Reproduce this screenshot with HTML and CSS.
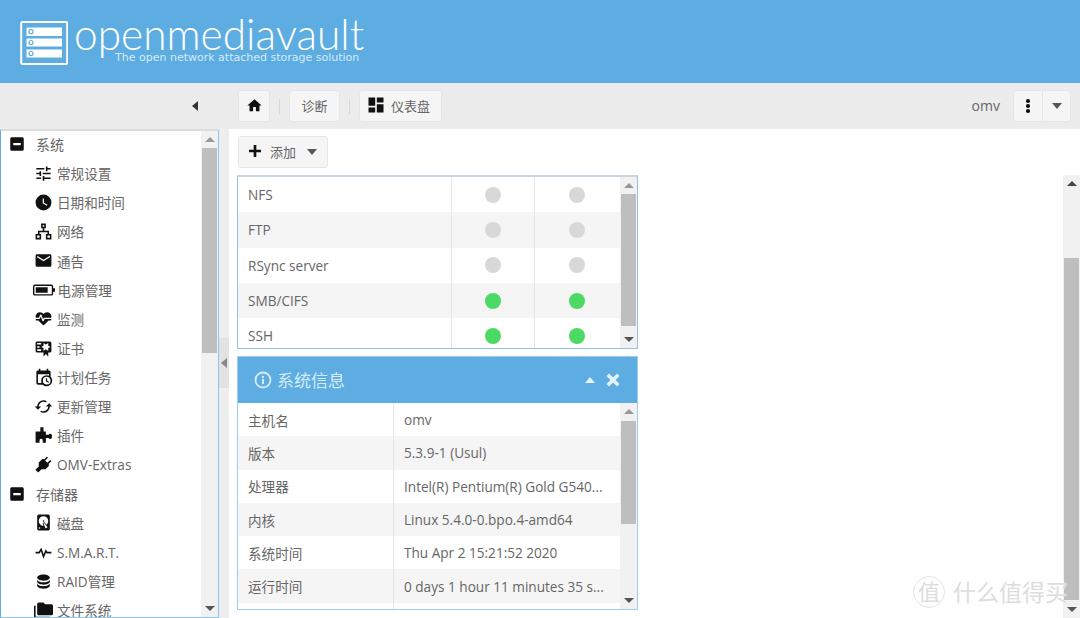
FILE: index.html
```html
<!DOCTYPE html>
<html lang="zh-CN">
<head>
  <meta charset="UTF-8" />
  <title>openmediavault</title>
  <link rel="stylesheet" href="styles.css">
</head>
<body>
  <svg class="defs" width="0" height="0">
    <symbol id="i-home" viewBox="0 0 24 24"><path d="M10,20V14H14V20H19V12H22L12,3L2,12H5V20H10Z"/></symbol>
    <symbol id="i-dash" viewBox="0 0 24 24"><path d="M13,3V9H21V3M13,21H21V11H13M3,21H11V15H3M3,13H11V3H3V13Z"/></symbol>
    <symbol id="i-plus" viewBox="0 0 24 24"><path d="M3,10H10V3H14V10H21V14H14V21H10V14H3Z"/></symbol>
    <symbol id="i-minus" viewBox="0 0 24 24"><path d="M17,13.5H7V10.5H17M19,3H5C3.89,3 3,3.89 3,5V19A2,2 0 0,0 5,21H19A2,2 0 0,0 21,19V5C21,3.89 20.1,3 19,3Z"/></symbol>
    <symbol id="i-tune" viewBox="0 0 24 24"><path d="M3,17V19H9V17H3M3,5V7H13V5H3M13,21V19H21V17H13V15H11V21H13M7,9V11H3V13H7V15H9V9H7M21,13V11H11V13H21M15,9H17V7H21V5H17V3H15V9Z"/></symbol>
    <symbol id="i-clock" viewBox="0 0 24 24"><path d="M12,2A10,10 0 0,0 2,12A10,10 0 0,0 12,22A10,10 0 0,0 22,12A10,10 0 0,0 12,2M16.2,16.2L11,13V7H12.5V12.2L17,14.9L16.2,16.2Z"/></symbol>
    <symbol id="i-net" viewBox="0 0 24 24"><path fill-rule="evenodd" d="M9,2H15V8H13V11H19V15H22V22H15V15H17V13H7V15H9V22H2V15H5V11H11V8H9V2M11,4V6H13V4H11M4,17V20H7V17H4M17,17V20H20V17H17Z"/></symbol>
    <symbol id="i-mail" viewBox="0 0 24 24"><path d="M20,8L12,13L4,8V6L12,11L20,6M20,4H4C2.89,4 2,4.89 2,6V18A2,2 0 0,0 4,20H20A2,2 0 0,0 22,18V6C22,4.89 21.1,4 20,4Z"/></symbol>
    <symbol id="i-batt" viewBox="0 0 24 24"><path fill-rule="evenodd" d="M2,6H20A2,2 0 0,1 22,8V10H24V14H22V16A2,2 0 0,1 20,18H2A2,2 0 0,1 0,16V8A2,2 0 0,1 2,6M2,7.5A.5,.5 0 0,0 1.5,8V16A.5,.5 0 0,0 2,16.5H20A.5,.5 0 0,0 20.5,16V8A.5,.5 0 0,0 20,7.5H2M3,9H16V15H3Z"/></symbol>
    <symbol id="i-heart" viewBox="0 0 24 24"><path d="M7.5,4A5.5,5.5 0 0,0 2,9.5C2,10 2.09,10.5 2.22,11H6.3L7.57,7.63C7.87,6.83 9.05,6.75 9.43,7.63L11.5,13L12.09,11.58C12.22,11.25 12.57,11 13,11H21.78C21.91,10.5 22,10 22,9.5A5.5,5.5 0 0,0 16.5,4C14.64,4 13,4.93 12,6.34C11,4.93 9.36,4 7.5,4M3,12.5A1,1 0 0,0 2,13.5A1,1 0 0,0 3,14.5H5.44L11,20C12,20.9 12,20.9 13,20L18.56,14.5H21A1,1 0 0,0 22,13.5A1,1 0 0,0 21,12.5H13.4L12.47,14.8C12.07,15.81 10.92,15.67 10.55,14.83L8.5,9.5L7.54,11.83C7.39,12.21 7.05,12.5 6.6,12.5H3Z"/></symbol>
    <symbol id="i-cert" viewBox="0 0 24 24"><path d="M4,3C2.89,3 2,3.89 2,5V15A2,2 0 0,0 4,17H12V22L15,19L18,22V17H20A2,2 0 0,0 22,15V8L22,6V5A2,2 0 0,0 20,3H16V3H4M12,5L15,7L18,5V8.5L21,10L18,11.5V15L15,13L12,15V11.5L9,10L12,8.5V5M4,5H9V7H4V5M4,9H7V11H4V9M4,13H9V15H4V13Z"/></symbol>
    <symbol id="i-cal" viewBox="0 0 24 24"><path d="M15,13H16.5V15.82L18.94,17.23L18.19,18.53L15,16.69V13M19,8H5V19H9.67C9.24,18.09 9,17.07 9,16A7,7 0 0,1 16,9C17.07,9 18.09,9.24 19,9.67V8M5,21C3.89,21 3,20.1 3,19V5C3,3.89 3.89,3 5,3H6V1H8V3H16V1H18V3H19A2,2 0 0,1 21,5V11.1C22.24,12.36 23,14.09 23,16A7,7 0 0,1 16,23C14.09,23 12.36,22.24 11.1,21H5M16,11.15A4.85,4.85 0 0,0 11.15,16C11.15,18.68 13.32,20.85 16,20.85A4.85,4.85 0 0,0 20.85,16C20.85,13.32 18.68,11.15 16,11.15Z"/></symbol>
    <symbol id="i-sync" viewBox="0 0 24 24"><path d="M12,18A6,6 0 0,1 6,12C6,11 6.25,10.03 6.7,9.2L5.24,7.74C4.46,8.97 4,10.43 4,12A8,8 0 0,0 12,20V23L16,19L12,15M12,4V1L8,5L12,9V6A6,6 0 0,1 18,12C18,13 17.75,13.97 17.3,14.8L18.76,16.26C19.54,15.03 20,13.57 20,12A8,8 0 0,0 12,4Z" transform="rotate(90 12 12)"/></symbol>
    <symbol id="i-puzzle" viewBox="0 0 24 24"><path d="M8,1.5H12V7H15V11H18.5A2,2 0 0,1 22.5,13A2,2 0 0,1 18.5,15H15V21H11V18A2,2 0 0,0 7,18V21H2V7H8Z"/></symbol>
    <symbol id="i-plug" viewBox="0 0 24 24"><path transform="rotate(45 12 12)" d="M16,7V2H14V7H10V2H8V7C7,7 6,8 6,9V14.5L9.5,18V24H14.5V18L18,14.5V9C18,8 17,7 16,7Z"/></symbol>
    <symbol id="i-disk" viewBox="0 0 24 24"><path d="M6,2H18A2,2 0 0,1 20,4V20A2,2 0 0,1 18,22H6A2,2 0 0,1 4,20V4A2,2 0 0,1 6,2M12,4A6,6 0 0,0 6,10C6,13.31 8.69,16 12.1,16L11.22,13.77C10.95,13.29 11.11,12.68 11.59,12.4L12.45,11.9C12.93,11.63 13.54,11.79 13.82,12.27L15.74,14.69C17.12,13.59 18,11.9 18,10A6,6 0 0,0 12,4M12,9A1,1 0 0,1 13,10A1,1 0 0,1 12,11A1,1 0 0,1 11,10A1,1 0 0,1 12,9M7,18A1,1 0 0,0 6,19A1,1 0 0,0 7,20A1,1 0 0,0 8,19A1,1 0 0,0 7,18M12.09,13.27L14.58,19.58L17.17,18.08L12.95,12.77L12.09,13.27Z"/></symbol>
    <symbol id="i-pulse" viewBox="0 0 24 24"><path d="M2,12.2H6.5L9,8L12,17L15,10L16.5,12.2H22" fill="none" stroke="#111" stroke-width="2"/></symbol>
    <symbol id="i-db" viewBox="0 0 24 24"><path d="M12,3C7.58,3 4,4.79 4,7C4,9.21 7.58,11 12,11C16.42,11 20,9.21 20,7C20,4.79 16.42,3 12,3M4,9V12C4,14.21 7.58,16 12,16C16.42,16 20,14.21 20,12V9C20,11.21 16.42,13 12,13C7.58,13 4,11.21 4,9M4,14V17C4,19.21 7.58,21 12,21C16.42,21 20,19.21 20,17V14C20,16.21 16.42,18 12,18C7.58,18 4,16.21 4,14Z"/></symbol>
    <symbol id="i-folder" viewBox="0 0 24 24"><path d="M22,4H14L12,2H6A2,2 0 0,0 4,4V16A2,2 0 0,0 6,18H22A2,2 0 0,0 24,16V6A2,2 0 0,0 22,4M2,6H0V20A2,2 0 0,0 2,22H20V20H2V6Z"/></symbol>
  </svg>

  <header class="topbar">
    <svg class="logo" viewBox="0 0 48 44" width="48" height="44">
      <rect x="1.2" y="1" width="46" height="42" rx="1.5" fill="none" stroke="#fff" stroke-width="2"/>
      <g fill="#fff">
        <rect x="6.5" y="6.5" width="35.5" height="8.5"/>
        <rect x="6.5" y="17.5" width="35.5" height="8"/>
        <rect x="6.5" y="28.5" width="35.5" height="8"/>
      </g>
      <g fill="none" stroke="#5dade2" stroke-width="1.2">
        <circle cx="11" cy="10.7" r="2"/>
        <circle cx="11" cy="21.5" r="2"/>
        <circle cx="11" cy="32.5" r="2"/>
      </g>
    </svg>
    <div class="brand">
      <div class="brand-name">openmediavault</div>
      <div class="brand-tag">The open network attached storage solution</div>
    </div>
  </header>

  <nav class="toolbar">
    <div class="toolbar-side"><i class="tri tri-left"></i></div>
    <div class="crumbs">
      <button class="btn btn-home"><svg class="ico ico-home"><use href="#i-home"/></svg></button>
      <span class="crumb-sep"></span>
      <button class="btn btn-diag">诊断</button>
      <span class="crumb-sep"></span>
      <button class="btn btn-dash"><svg class="ico"><use href="#i-dash"/></svg>仪表盘</button>
    </div>
    <div class="user">
      <span class="user-name">omv</span>
      <div class="btn-group">
        <button class="btn-part btn-dots"><i></i><i></i><i></i></button>
        <button class="btn-part"><i class="tri tri-down"></i></button>
      </div>
    </div>
  </nav>

  <div class="workspace">
    <aside class="sidebar">
      <ul class="menu">
        <li class="menu-group"><svg class="ico"><use href="#i-minus"/></svg>系统</li>
        <li class="menu-item"><svg class="ico"><use href="#i-tune"/></svg>常规设置</li>
        <li class="menu-item"><svg class="ico"><use href="#i-clock"/></svg>日期和时间</li>
        <li class="menu-item"><svg class="ico"><use href="#i-net"/></svg>网络</li>
        <li class="menu-item"><svg class="ico"><use href="#i-mail"/></svg>通告</li>
        <li class="menu-item"><svg class="ico ico-wide"><use href="#i-batt"/></svg>电源管理</li>
        <li class="menu-item"><svg class="ico"><use href="#i-heart"/></svg>监测</li>
        <li class="menu-item"><svg class="ico"><use href="#i-cert"/></svg>证书</li>
        <li class="menu-item"><svg class="ico"><use href="#i-cal"/></svg>计划任务</li>
        <li class="menu-item"><svg class="ico"><use href="#i-sync"/></svg>更新管理</li>
        <li class="menu-item"><svg class="ico"><use href="#i-puzzle"/></svg>插件</li>
        <li class="menu-item"><svg class="ico"><use href="#i-plug"/></svg>OMV-Extras</li>
        <li class="menu-group"><svg class="ico"><use href="#i-minus"/></svg>存储器</li>
        <li class="menu-item"><svg class="ico"><use href="#i-disk"/></svg>磁盘</li>
        <li class="menu-item"><svg class="ico"><use href="#i-pulse"/></svg>S.M.A.R.T.</li>
        <li class="menu-item"><svg class="ico"><use href="#i-db"/></svg>RAID管理</li>
        <li class="menu-item"><svg class="ico"><use href="#i-folder"/></svg>文件系统</li>
      </ul>
      <div class="scrollbar sb-side">
        <i class="tri tri-up"></i>
        <div class="thumb"></div>
        <i class="tri tri-down"></i>
      </div>
    </aside>

    <div class="splitter"><div class="splitter-handle"><i class="tri tri-left"></i></div></div>

    <main class="main">
      <div class="main-tools">
        <button class="btn btn-add"><svg class="ico ico-16"><use href="#i-plus"/></svg>添加<i class="tri tri-down"></i></button>
      </div>
      <div class="main-body">
        <div class="widgets">
          <section class="panel panel-services">
            <div class="panel-rows">
              <div class="svc-row"><span>NFS</span><span><i class="dot"></i></span><span><i class="dot"></i></span></div>
              <div class="svc-row"><span>FTP</span><span><i class="dot"></i></span><span><i class="dot"></i></span></div>
              <div class="svc-row"><span>RSync server</span><span><i class="dot"></i></span><span><i class="dot"></i></span></div>
              <div class="svc-row"><span>SMB/CIFS</span><span><i class="dot on"></i></span><span><i class="dot on"></i></span></div>
              <div class="svc-row"><span>SSH</span><span><i class="dot on"></i></span><span><i class="dot on"></i></span></div>
            </div>
            <div class="scrollbar sb-services">
              <i class="tri tri-up"></i>
              <div class="thumb"></div>
              <i class="tri tri-down"></i>
            </div>
          </section>

          <section class="panel panel-info">
            <div class="panel-head">
              <svg class="info-ico" viewBox="0 0 24 24" width="18" height="18">
                <circle cx="12" cy="12" r="10" fill="none" stroke="#d6ebf8" stroke-width="2.4"/>
                <rect x="10.6" y="10.5" width="2.8" height="7" fill="#d6ebf8"/>
                <rect x="10.6" y="6.5" width="2.8" height="2.6" fill="#d6ebf8"/>
              </svg>
              <h2>系统信息</h2>
              <i class="tri tri-up tri-head"></i>
              <svg class="close-ico" viewBox="0 0 14 14" width="14" height="14"><path d="M3,0.5L7,4.5L11,0.5L13.5,3L9.5,7L13.5,11L11,13.5L7,9.5L3,13.5L0.5,11L4.5,7L0.5,3Z" fill="#e6f2fb"/></svg>
            </div>
            <div class="panel-content">
              <div class="panel-rows">
                <div class="info-row"><span>主机名</span><span>omv</span></div>
                <div class="info-row"><span>版本</span><span>5.3.9-1 (Usul)</span></div>
                <div class="info-row"><span>处理器</span><span>Intel(R) Pentium(R) Gold G540...</span></div>
                <div class="info-row"><span>内核</span><span>Linux 5.4.0-0.bpo.4-amd64</span></div>
                <div class="info-row"><span>系统时间</span><span>Thu Apr 2 15:21:52 2020</span></div>
                <div class="info-row"><span>运行时间</span><span>0 days 1 hour 11 minutes 35 s...</span></div>
                <div class="info-row"><span></span><span></span></div>
              </div>
              <div class="scrollbar sb-info">
                <i class="tri tri-up"></i>
                <div class="thumb"></div>
                <i class="tri tri-down"></i>
              </div>
            </div>
          </section>
        </div>
        <div class="scrollbar sb-main">
          <i class="tri tri-up"></i>
          <div class="thumb"></div>
          <i class="tri tri-down"></i>
        </div>
      </div>
    </main>
  </div>

  <div class="watermark"><span class="wm-seal">值</span><span>什么值得买</span></div>
</body>
</html>
```
FILE: styles.css
```css
* {
  box-sizing: border-box;
}
html, body {
  height: 100%;
}
body {
  margin: 0;
  overflow: hidden;
  display: flex;
  flex-direction: column;
  position: relative;
  background: #fff;
  color: #666;
  font-family: "Open Sans", "Noto Sans CJK SC", sans-serif;
  font-size: 13.6px;
}
.defs {
  position: absolute;
}
.ico {
  width: 20px;
  height: 20px;
  fill: #111;
  flex: none;
}
.ico-16 {
  width: 16px;
  height: 16px;
}
.ico-home {
  width: 17px;
  height: 17px;
}

/* css triangles */
.tri {
  display: block;
  width: 0;
  height: 0;
  border-style: solid;
  border-color: transparent;
}
.tri-up {
  border-width: 0 5px 5px;
  border-bottom-color: #555;
}
.tri-down {
  border-width: 6px 5.5px 0;
  border-top-color: #555;
}
.tri-left {
  border-width: 5px 6px 5px 0;
  border-right-color: #333;
}

/* header */
.topbar {
  height: 83px;
  flex: none;
  background: #5dade2;
  display: flex;
  align-items: flex-start;
  padding: 21px 0 0 20px;
  color: #fff;
}
.logo {
  flex: none;
}
.brand {
  margin-left: 6px;
  position: relative;
}
.brand-name {
  font-family: Lato, sans-serif;
  font-weight: 300;
  font-size: 42.4px;
  line-height: 30px;
  margin-top: -2px;
  white-space: nowrap;
}
.brand-tag {
  font-family: "DejaVu Sans", sans-serif;
  font-size: 11px;
  line-height: 13px;
  margin: 2px 0 0 41px;
  color: #d6ebf8;
  white-space: nowrap;
}

/* toolbar */
.toolbar {
  height: 46px;
  flex: none;
  background: #ececec;
  display: flex;
  align-items: center;
}
.toolbar-side {
  width: 238px;
  display: flex;
  justify-content: flex-end;
  padding-right: 40px;
}
.crumbs {
  display: flex;
  align-items: center;
}
.btn {
  height: 32px;
  display: flex;
  align-items: center;
  justify-content: center;
  border: 1px solid #e6e6e6;
  border-radius: 3px;
  background: #f5f5f5;
  color: #666;
  font: inherit;
  font-size: 13px;
  padding: 0 0 2px;
}
.btn-home {
  width: 32px;
}
.btn-diag {
  width: 51px;
}
.btn-dash {
  width: 83px;
  gap: 5.5px;
  justify-content: flex-start;
  padding-left: 5.5px;
}
.crumb-sep {
  width: 1px;
  height: 15px;
  margin: 0 9px;
  background: #d8d8d8;
}
.user {
  margin-left: auto;
  display: flex;
  align-items: center;
  padding-right: 9px;
}
.user-name {
  margin-right: 13px;
  font-size: 14px;
  padding-bottom: 1px;
}
.btn-group {
  display: flex;
  height: 32px;
  border-radius: 3px;
  background: #f5f5f5;
  border: 1px solid #e6e6e6;
}
.btn-part {
  width: 28px;
  border: 0;
  padding: 0;
  background: none;
  display: flex;
  flex-direction: column;
  align-items: center;
  justify-content: center;
}
.btn-part + .btn-part {
  border-left: 1px solid #e6e6e6;
}
.btn-dots {
  gap: 1.5px;
}
.btn-dots i {
  width: 3.5px;
  height: 3.5px;
  border-radius: 50%;
  background: #111;
}

/* body of the page */
.workspace {
  flex: 1;
  min-height: 0;
  display: flex;
}
.sidebar {
  width: 219px;
  flex: none;
  display: flex;
  border: 1px solid #8ec6ea;
  border-left-color: #5dade2;
  border-top: 2px solid #dcdcdc;
  overflow: hidden;
}
.menu {
  flex: 1;
  list-style: none;
  margin: -1.5px 0 0;
  padding: 0;
  overflow: hidden;
}
.menu-group, .menu-item {
  height: 29.15px;
  display: flex;
  align-items: center;
  white-space: nowrap;
}
.menu-group {
  padding-left: 6.75px;
  gap: 10.25px;
  font-size: 14px;
}
.menu-item {
  padding-left: 32.5px;
  gap: 4.5px;
}
.menu-item .ico {
  width: 19px;
  height: 19px;
}
.menu-group .ico {
  width: 18px;
  height: 18px;
}
.menu-item .ico-wide {
  width: 22px;
  height: 22px;
  margin-left: -0.5px;
  margin-right: -2px;
}

/* fake scrollbars */
.scrollbar {
  flex: none;
  width: 17px;
  background: #f1f1f1;
  display: flex;
  flex-direction: column;
  align-items: center;
  position: relative;
  padding-top: 6px;
}
.scrollbar .tri-up {
  border-bottom-color: #999;
}
.scrollbar .tri-down {
  position: absolute;
  bottom: 6px;
  border-width: 5px 5px 0;
}
.thumb {
  width: 15px;
  background: #bebebe;
}
.sb-side .thumb {
  height: 205px;
  margin-top: 6px;
}
.sb-services .thumb {
  height: 132px;
  margin-top: 6px;
}
.sb-info .thumb {
  height: 103px;
  margin-top: 7px;
}
.sb-main .tri-up {
  border-bottom-color: #444;
}
.sb-main .thumb {
  height: 342px;
  margin-top: 72px;
}

.splitter {
  width: 10px;
  flex: none;
  background: #eee;
  display: flex;
  align-items: center;
  padding-bottom: 22px;
}
.splitter-handle {
  width: 10px;
  height: 50px;
  background: #e2e2e2;
  display: flex;
  align-items: center;
  justify-content: center;
}
.splitter-handle .tri {
  border-right-color: #888;
}

.main {
  flex: 1;
  min-width: 0;
  display: flex;
  flex-direction: column;
}
.main-tools {
  height: 46px;
  flex: none;
  padding: 7px 0 0 9px;
}
.btn-add {
  width: 90px;
  gap: 7px;
  padding-right: 2px;
}
.btn-add .tri {
  margin: 2px 0 0 4px;
}
.main-body {
  flex: 1;
  min-height: 0;
  display: flex;
}
.widgets {
  flex: 1;
  padding: 0 0 0 8px;
}

/* dashboard panels */
.panel {
  width: 401px;
  border: 1px solid #8ec6ea;
}
.panel-services {
  height: 174px;
  display: flex;
  border-top: 2px solid #c8d6df;
  margin-bottom: 7px;
}
.panel-rows {
  flex: 1;
  min-width: 0;
  overflow: hidden;
}
.svc-row {
  height: 35.3px;
  display: grid;
  grid-template-columns: 213px 83px 84px;
  align-items: center;
}
.svc-row span {
  padding-left: 10px;
  height: 100%;
  display: flex;
  align-items: center;
}
.svc-row span + span {
  justify-content: center;
  padding-left: 0;
  border-left: 1px solid #e6e6e6;
}
.svc-row:nth-child(even), .info-row:nth-child(even) {
  background: #f5f5f5;
}
.dot {
  width: 16px;
  height: 16px;
  border-radius: 50%;
  background: #d8d8d8;
}
.dot.on {
  background: #4cd964;
}
.panel-info {
  height: 254px;
  display: flex;
  flex-direction: column;
  border-color: #9ccdec;
}
.panel-head {
  height: 46px;
  flex: none;
  background: #5dade2;
  display: flex;
  align-items: center;
  padding: 0 17px 0 16px;
  color: #d6ebf8;
}
.panel-head h2 {
  margin: 0 0 2px 5px;
  font-size: 17px;
  font-weight: 400;
  flex: 1;
}
.tri-head {
  border-width: 0 5.5px 6px;
  border-bottom-color: #e6f2fb;
  margin-right: 11px;
}
.panel-content {
  flex: 1;
  min-height: 0;
  display: flex;
}
.info-row {
  height: 33.3px;
  display: grid;
  grid-template-columns: 155px 1fr;
  align-items: center;
}
.info-row span {
  padding-left: 10px;
  height: 100%;
  display: flex;
  align-items: center;
  white-space: nowrap;
}
.info-row span + span {
  border-left: 1px solid #e6e6e6;
}

/* site watermark on top of the shot */
.watermark {
  position: absolute;
  left: 913px;
  top: 576px;
  display: flex;
  align-items: center;
  gap: 8px;
  font-size: 23px;
  line-height: 32px;
  color: #ddd;
  text-shadow: 0 0 2px #fff;
  pointer-events: none;
}
.wm-seal {
  width: 32px;
  height: 32px;
  border: 1px solid #e4e4e4;
  border-radius: 50%;
  text-align: center;
  line-height: 28px;
  font-size: 22px;
}
```
